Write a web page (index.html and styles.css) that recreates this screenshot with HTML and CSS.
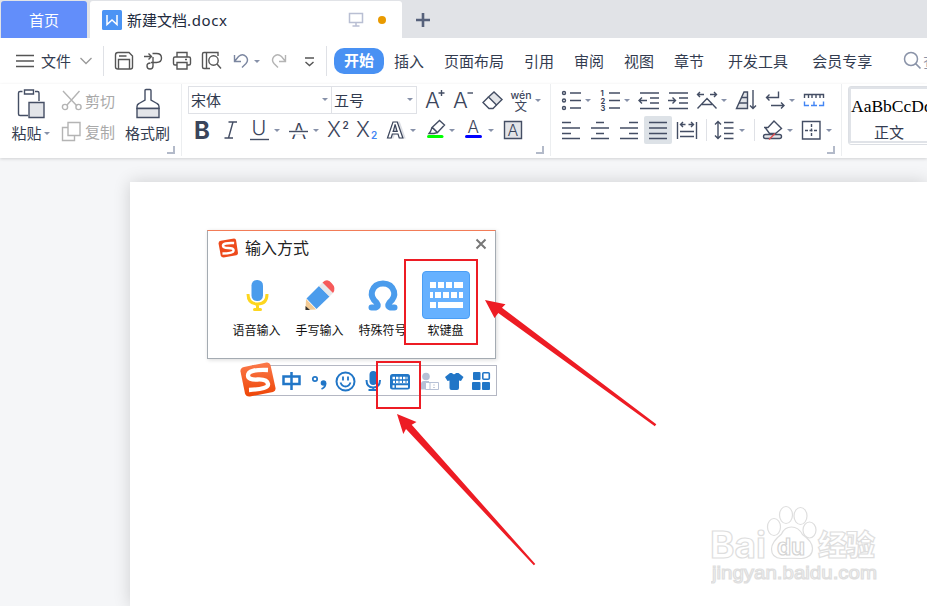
FILE: index.html
```html
<!DOCTYPE html>
<html lang="zh-CN">
<head>
    <meta charset="UTF-8">
    <title>新建文档.docx</title>
    <link rel="stylesheet" href="styles.css">
</head>
<body>
    <div class="app">
        <div class="tabbar">
            <div class="tab-home">首页</div>
            <div class="tab-doc">
                <svg class="doc-logo" width="20" height="20"><rect width="20" height="20" rx="1.5" fill="#4b94f4"/><path d="M5 5v9.5l5-4.5 5 4.500V5" fill="none" stroke="#fff" stroke-width="1.5"/></svg>
                <span class="doc-name">新建文档<span class="ext">.docx</span></span>
                <svg class="doc-screen" width="16" height="16"><path d="M1.500 1.500h13v9h-13zM8 10.500v3M4.500 14h7" fill="none" stroke="#b9bfd3" stroke-width="1.500"/></svg>
                <span class="doc-dot"></span>
            </div>
            <svg class="tab-add" width="16" height="16"><path d="M8 1v14M1 8h14" stroke="#56617b" stroke-width="2.600"/></svg>
        </div>

        <div class="menubar">
            <svg class="burger" width="19" height="14"><path d="M0 1.500h18M0 7h18M0 12.500h18" stroke="#555" stroke-width="1.500"/></svg>
            <span class="file">文件</span>
            <svg class="file-arrow" width="12" height="8"><path d="M.5 1l5.500 5.500L11.500 1" fill="none" stroke="#999" stroke-width="1.300"/></svg>
            <div class="quick">
                <svg class="ic dark" width="29" height="28"><path d="M8 5.500h11l3.500 3.500v11q0 2-2 2H8q-2.500 0-2.500-2V8q0-2.500 2.500-2.500zM8.500 22v-9.500h11V22M9 9h7.500"/></svg>
                <svg class="ic dark" width="29" height="28"><path d="M5 9.500h7M9.500 6.500l3 3-3 3M13.500 6.500h4q5 0 5 4.500t-5 4.500H12M14 10v9q0 3-3 3t-3-3 3.500-3"/></svg>
                <svg class="ic dark" width="29" height="28"><path d="M9 10V5.500h10V10M9 18H7q-1.500 0-1.500-1.500v-5Q5.500 10 7 10h14q1.500 0 1.500 1.500v5q0 1.500-1.500 1.500h-2M9 15.500h10V22H9zM17 12.500h2"/></svg>
                <svg class="ic dark" width="29" height="28"><path d="M13 21.500H7q-1.500 0-1.500-1.500V7q0-1.500 1.500-1.500h14V9M9.500 6v15"/><circle cx="16.500" cy="13.500" r="4.700"/><path d="M20 17l4 4.500"/></svg>
                <svg class="ic slate" width="39" height="28"><path d="M8.500 8v6.500H15M8.500 14.500l4-5q4-3.500 7.500 0 3 3.500 0 7L16 20.500"/><path class="caret" d="M28 13h6l-3 3z"/></svg>
                <svg class="ic pale" width="29" height="28"><path d="M20.500 8v6.500H14M20.500 14.500l-4-5q-4-3.500-7.500 0-3 3.500 0 7l4 4"/></svg>
                <svg class="ic dark" width="29" height="28"><path d="M11 11h9M11.500 15l4 3.500 4-3.500"/></svg>
            </div>
            <div class="menu">
                <span class="active">开始</span>
                <span>插入</span>
                <span>页面布局</span>
                <span>引用</span>
                <span>审阅</span>
                <span>视图</span>
                <span>章节</span>
                <span class="wide">开发工具</span>
                <span class="wide">会员专享</span>
            </div>
            <div class="search">
                <svg width="20" height="20"><circle cx="8" cy="8" r="6.500" fill="none" stroke="#8a93a8" stroke-width="1.500"/><path d="M12.500 12.500l5 5" stroke="#8a93a8" stroke-width="1.700"/></svg>
                <span>查找</span>
            </div>
        </div>

        <div class="ribbon">
            <div class="group clipboard">
                <div class="big paste">
                    <svg class="ic" width="30" height="32"><path d="M6.500 4.500H4q-1.500 0-1.500 1.500v21q0 1.500 1.500 1.500h8M19 4.500h2.500q1.500 0 1.500 1.500v8M8.500 3h9v4h-9z"/><path class="shade" d="M13 15.500h15v15H13z"/></svg>
                    <span>粘贴<i class="tri"></i></span>
                </div>
                <div class="small">
                    <div><svg class="ic pale" width="22" height="22"><path d="M2 1l14 15M18.500 1L6 15"/><circle cx="4" cy="17" r="2.600"/><circle cx="17.500" cy="17" r="2.600"/></svg>剪切</div>
                    <div><svg class="ic pale" width="22" height="22"><path d="M7 1.500h12v13H7zM7 6.500H1.500v13h12v-5"/></svg>复制</div>
                </div>
                <div class="big brush">
                    <svg class="ic" width="26" height="32"><path d="M10 13V3.500q0-1 1-1h4q1 0 1 1V13l6 3.500q2 1 2 3v2H2v-2q0-2 2-3z"/><path class="shade" d="M2 21.500h22v9H2z"/></svg>
                    <span>格式刷</span>
                </div>
            </div>

            <div class="group font">
                <div class="row">
                    <div class="select name">宋体<i class="tri"></i></div>
                    <div class="select size">五号<i class="tri"></i></div>
                    <svg class="ic" width="29" height="28"><text class="thin" x="5" y="22" font-size="22">A</text><path d="M18.500 7h6M21.500 4v6"/></svg>
                    <svg class="ic" width="29" height="28"><text class="thin" x="4" y="22" font-size="22">A</text><path d="M18.500 7H24"/></svg>
                    <svg class="ic" width="29" height="28"><path class="shade" d="M10.500 11l5.500-5 8 7.500-5.500 5.500z"/><path d="M10.500 11L5 16.500l6 6h4l3.500-3.500"/></svg>
                    <svg class="ic" width="39" height="28"><text x="3.500" y="12.500" font-size="10.500" font-weight="500">wén</text><text class="cjk" x="7.500" y="24.500" font-size="12.500">文</text><path class="caret" d="M28 13h6l-3 3z"/></svg>
                </div>
                <div class="row">
                    <svg class="ic" width="29" height="28"><text x="6" y="22.500" font-size="24" font-weight="700">B</text></svg>
                    <svg class="ic" width="29" height="28"><path d="M11.500 6H20M7.500 22H16M16 6l-4.500 16"/></svg>
                    <svg class="ic" width="39" height="28"><text class="thin" x="5.500" y="19" font-size="20">U</text><path d="M4 23.500h19"/><path class="caret" d="M28 13h6l-3 3z"/></svg>
                    <svg class="ic" width="39" height="28"><text class="thin" x="6.500" y="22.500" font-size="22">A</text><path class="gap" d="M4 16.500h19"/><path d="M4 15.500h19"/><path class="caret" d="M28 13h6l-3 3z"/></svg>
                    <svg class="ic" width="29" height="28"><text class="thin" x="3" y="21" font-size="21">X</text><text x="18.500" y="13" font-size="10" font-weight="600">2</text></svg>
                    <svg class="ic" width="29" height="28"><text class="thin" x="3" y="21" font-size="21">X</text><text class="blue" x="18" y="23" font-size="10" font-weight="600">2</text></svg>
                    <svg class="ic" width="39" height="28"><text class="hollow" x="5" y="22" font-size="22" font-weight="700">A</text><path class="caret" d="M28 13h6l-3 3z"/></svg>
                    <svg class="ic" width="39" height="28"><path d="M11 11.500L18.500 4.500l5 4.500-7 7.500zM11 11.500l-1.500 4L8 17.500h5l3.500-1M12 12l4 4"/><rect x="6" y="19" width="16.500" height="3" rx="1.500" fill="#0f0" stroke="none"/><path class="caret" d="M28 13h6l-3 3z"/></svg>
                    <svg class="ic" width="39" height="28"><text class="thin" x="7.500" y="17" font-size="17">A</text><rect x="5" y="19" width="17" height="3" rx="1.500" fill="#00f" stroke="none"/><path class="caret" d="M28 13h6l-3 3z"/></svg>
                    <svg class="ic" width="29" height="28"><path class="shade" d="M5.500 5.500h17v17h-17z"/><text class="thin" x="8.500" y="19.500" font-size="16">A</text></svg>
                </div>
            </div>

            <div class="group para">
                <div class="row">
                    <svg class="ic" width="39" height="28"><circle cx="7" cy="7" r="1.500"/><circle cx="7" cy="14.500" r="1.500"/><circle cx="7" cy="22" r="1.500"/><path d="M13 7h11M13 14.500h11M13 22h11"/><path class="caret" d="M28 13h6l-3 3z"/></svg>
                    <svg class="ic" width="39" height="28"><text x="4.500" y="9.500" font-size="7.500" font-weight="700">1</text><text x="4.500" y="17.500" font-size="7.500" font-weight="700">2</text><text x="4.500" y="25" font-size="7.500" font-weight="700">3</text><path d="M13 7h11M13 14.500h11M13 22h11"/><path class="caret" d="M28 13h6l-3 3z"/></svg>
                    <svg class="ic" width="29" height="28"><path d="M5 7h19M15 12h9M15 17h9M5 22.500h19M4 14.500h8M7 11.500l-3 3 3 3"/></svg>
                    <svg class="ic" width="29" height="28"><path d="M5 7h19M15 12h9M15 17h9M5 22.500h19M4 14.500h7M8.500 11.500l3 3-3 3"/></svg>
                    <svg class="ic" width="39" height="28"><path d="M4.500 8.500H11M7 6L4.500 8.500 7 11M17 8.500h6.500M21 6l2.500 2.500L21 11M4.500 22.500L14 12.500l9.500 10M9 18.500h10"/><path class="caret" d="M28 13h6l-3 3z"/></svg>
                    <svg class="ic" width="29" height="28"><path class="shade" d="M4.500 22.500L12 6h3.500v16.500z"/><path d="M9.500 11.500h6M7 17h8.500M21 4v18M18 19.500l3 3 3-3"/></svg>
                    <svg class="ic" width="39" height="28"><path d="M17.500 5.500v6H6M8.500 8.500l-3 3 3 3M10 19.500h12.500M20 16.500l3 3-3 3"/><path class="caret" d="M28 13h6l-3 3z"/></svg>
                    <svg class="ic" width="29" height="28"><path d="M4.500 12V8.500h19V12M8.500 8.500V12M12 8.500V12M16 8.500V12M20 8.500V12"/><path class="blue-line" d="M4.500 15.500v4H9M23.500 15.500v4H19M14 15.500v4M11 19.500h6"/></svg>
                </div>
                <div class="row">
                    <svg class="ic" width="29" height="28"><path d="M5 6.500h9M5 12h18M5 17.500h9M5 22.500h18"/></svg>
                    <svg class="ic" width="29" height="28"><path d="M10 6.500h8M5 12h18M10 17.500h8M5 22.500h18"/></svg>
                    <svg class="ic" width="29" height="28"><path d="M14 6.500h9M5 12h18M14 17.500h9M5 22.500h18"/></svg>
                    <svg class="ic on" width="28" height="28"><path d="M5 6.500h18M5 12h18M5 17.500h18M5 22.500h18"/></svg>
                    <svg class="ic" width="29" height="28"><path d="M4.500 6v17M23.500 6v17M7.500 8.500h5M10 6L7.500 8.500 10 11M15.500 8.500h5M18 6l2.500 2.500L18 11M7 15.500h14M7 20.500h14"/></svg>
                    <i class="bar"></i>
                    <svg class="ic" width="39" height="28"><path d="M7 5.500v17M4 8.500l3-3 3 3M4 19.500l3 3 3-3M13 6.500h9.500M13 12h9.500M13 17.500h9.500M13 22.500h9.500"/><path class="caret" d="M28 13h6l-3 3z"/></svg>
                    <i class="bar"></i>
                    <svg class="ic" width="39" height="28"><path d="M5 11.500h4L15 5l7.500 7.500-6 5h-6l-4-5.500"/><rect class="shade" x="4.500" y="18.500" width="18" height="4" rx="2"/><path d="M10 23.500l6-6" class="red-line"/><path class="caret" d="M28 13h6l-3 3z"/></svg>
                    <svg class="ic" width="39" height="28"><path d="M4.500 5.500h17.500v17.500H4.500z"/><path d="M13.500 8v12M7 14.500h13" stroke-dasharray="3 1.500"/><path class="caret" d="M28 13h6l-3 3z"/></svg>
                </div>
            </div>

            <div class="styles">
                <div class="style-item">
                    <div class="sample">AaBbCcDd</div>
                    <div class="style-name">正文</div>
                </div>
            </div>
        </div>

        <div class="workspace">
            <div class="page"></div>
        </div>

        <!-- 输入方式 -->
        <div class="ime-panel">
            <div class="ime-head">
                <svg width="20" height="20" viewBox="0 0 36 36"><path d="M5 5L29 1q3 0 3.500 3L36 27q0 3-3 4L10 35q-4 0-5-3L1 10q-.5-4 4-5z" fill="#ee4a1c"/><path d="M29 9Q9 8 9 14q0 4 9 4 11 0 10 5-1 5-20 5" fill="none" stroke="#fff" stroke-width="4.500"/></svg>
                <span>输入方式</span>
                <svg class="close" width="12" height="12"><path d="M1.500 1.500l9 9M10.500 1.500l-9 9" stroke="#777" stroke-width="2"/></svg>
            </div>
            <div class="ime-items">
                <div class="ime-item">
                    <svg width="48" height="48"><rect x="18.500" y="9" width="11.500" height="21" rx="5.500" fill="#4b9cec"/><path d="M15 23q0 10 9.500 10T34 23M24.500 33v5" fill="none" stroke="#fdd61f" stroke-width="3"/><rect x="20" y="37" width="9" height="3" rx="1.500" fill="#fdd61f"/></svg>
                    <span>语音输入</span>
                </div>
                <div class="ime-item">
                    <svg width="48" height="48"><path d="M10 28l10 10.500-10.500.5z" fill="#f3cb95"/><path d="M9.500 35l4.500 4H9.500z" fill="#333"/><path d="M10.500 27.500L23 15l10.500 10.500L20.500 38z" fill="#4b9cec"/><path d="M23 15l3.500-3.500L37 22l-3.500 3.500z" fill="#e8e8ea"/><path d="M26.500 11.500q5-4.500 9 .5 5 5 1.500 10z" fill="#f65a5a"/></svg>
                    <span>手写输入</span>
                </div>
                <div class="ime-item">
                    <svg width="48" height="48"><path d="M12.500 36.500h4q4-1 1-5-6-5-4.500-11Q15.500 12.500 24 12.500t11 8q1.500 6-4.500 11-3 4 1 5h4" fill="none" stroke="#4b9cec" stroke-width="6" stroke-linecap="round"/></svg>
                    <span>特殊符号</span>
                </div>
                <div class="ime-item">
                    <svg width="48" height="48"><rect x=".5" y=".5" width="47" height="47" rx="3.500" fill="#66b1ff" stroke="#4a9ef5"/><path d="M8 11h6v6H8zM16 11h6v6h-6zM24 11h6v6h-6zM32 11h9v6h-9zM8 21h3v6H8zM13 21h6v6h-6zM21 21h6v6h-6zM29 21h6v6h-6zM37 21h4v6h-4zM8 31h6v6H8zM16 31h25v6H16z" fill="#fff"/></svg>
                    <span>软键盘</span>
                </div>
            </div>
        </div>

        <div class="ime-bar">
            <svg class="ime-logo" width="36" height="36"><defs><linearGradient id="sg" x1="0" y1="0" x2="0" y2="1"><stop offset="0" stop-color="#fb7a4b"/><stop offset="1" stop-color="#ee4506"/></linearGradient></defs><path d="M4 5L26.500.5q3-.5 4 2.500L35.500 26q.5 3-2.500 4L10 34.500q-4 .5-5-3L.5 9.500Q0 6 4 5z" fill="url(#sg)"/><path d="M28 8Q8 7 8 13.500q0 4.500 9.500 4T28 22t-19 6" fill="none" stroke="#fff" stroke-width="4.300"/></svg>
            <svg width="27" height="29"><path d="M4.500 10.500h16v7.500h-16zM12.500 6v18" fill="none" stroke="#2176c7" stroke-width="2.500"/></svg>
            <svg width="27" height="29"><circle cx="9" cy="13" r="2.200" fill="none" stroke="#2176c7" stroke-width="1.700"/><circle cx="17.500" cy="17" r="2.800" fill="#2176c7"/><path d="M19.500 17q.5 4-4 6" fill="none" stroke="#2176c7" stroke-width="1.700"/></svg>
            <svg width="27" height="29"><circle cx="12.500" cy="15.500" r="9" fill="none" stroke="#2176c7" stroke-width="2"/><path d="M10 10.500v4M15 10.500v4M7.500 16.500q1.500 4 5 4t5-4" fill="none" stroke="#2176c7" stroke-width="1.800"/></svg>
            <svg width="27" height="29"><rect x="9.500" y="5" width="7.500" height="14" rx="3.700" fill="#2176c7"/><path d="M6.500 14q0 7.500 6.700 7.500T20 14M13.200 21v3.500M8.500 24h9.500" fill="none" stroke="#2176c7" stroke-width="2"/></svg>
            <svg width="27" height="29"><rect x="3" y="8" width="20" height="15.500" rx="2.500" fill="#2176c7"/><path d="M5.500 12h15M6 16h15M5.500 20.500h2M9 20.500h12" fill="none" stroke="#fff" stroke-width="2.300"/><path d="M8.500 10v7M12 10v7M15.500 10v7M19 10v7" stroke="#2176c7"/></svg>
            <svg width="27" height="29"><circle cx="12" cy="10.500" r="3.800" fill="#b6c1d6"/><path d="M7 23.500V18q0-3 3-3h5v8.500z" fill="#b6c1d6"/><path d="M11.500 16.500h13v7h-13zM16 16.500v7" fill="#fff" stroke="#b6c1d6"/><path d="M20 18.500v1M20 21v1" stroke="#8d9bb5"/></svg>
            <svg width="27" height="29"><path d="M9 7h2q2 2.500 4 0h2.500l5 4-2.500 4-2-.5V22q0 2-2 2h-5.500q-2 0-2-2v-7.500l-2 .5L4 11z" fill="#2176c7"/></svg>
            <svg width="27" height="29"><rect x="5" y="6" width="7.500" height="8" rx="1" fill="#2176c7"/><rect x="4" y="16" width="8.500" height="8" rx="1" fill="#2176c7"/><rect x="14" y="16" width="8" height="8" rx="1" fill="#2176c7"/><rect x="14.800" y="6.800" width="6.500" height="6.500" rx="1" fill="#fff" stroke="#2176c7" stroke-width="1.600"/></svg>
        </div>

        <!-- 标注 -->
        <svg class="marks" width="927" height="606">
            <rect x="405" y="260" width="72" height="84"/>
            <rect x="377" y="362" width="43" height="46"/>
            <path d="M485 300l20.500 4.300-3.500 3.400L656.300 424.300l-1.500 2L498.300 313l-3.800 5z"/>
            <path d="M397 414l19.500 8-4.800 2.700L535.300 564l-1.500 1.300L406 429l-2.700 5z"/>
        </svg>

        <svg class="watermark" width="180" height="95">
            <text class="bold" x="-1" y="63" font-size="37" textLength="56" lengthAdjust="spacingAndGlyphs">Bai</text>
            <ellipse cx="63" cy="32" rx="6.500" ry="8.500"/>
            <ellipse cx="75" cy="20" rx="6.500" ry="8.500"/>
            <ellipse cx="89.500" cy="21" rx="6.500" ry="8.500"/>
            <ellipse cx="98.500" cy="35" rx="6.500" ry="8"/>
            <path d="M80.500 32q-7 0-10 7-10 8-10 15 0 9 10 9.500 10-.5 20 0 11-1 11-10 0-7-10-14-4-7.500-11-7.500z"/>
            <text class="bold du" x="66" y="60" font-size="23" textLength="28" lengthAdjust="spacingAndGlyphs">du</text>
            <text class="cjk" x="107" y="61" font-size="29" font-weight="900" textLength="57">经验</text>
            <text x="1" y="84" font-size="19" textLength="165" lengthAdjust="spacingAndGlyphs">jingyan.baidu.com</text>
        </svg>
    </div>
</body>
</html>
```

FILE: styles.css
```css
* {
    box-sizing: border-box;
}
body {
    margin: 0;
    font-family: 'Noto Sans', 'Noto Sans CJK SC', sans-serif;
    font-size: 15px;
    color: #333c50;
}
svg {
    display: block;
    flex: none;
}
.app {
    position: relative;
    display: flex;
    flex-direction: column;
    width: 927px;
    height: 606px;
    overflow: hidden;
    background: #fff;
    white-space: nowrap;
}

/* tabs */
.tabbar {
    display: flex;
    align-items: center;
    height: 38px;
    padding: 1px 0 0 1px;
    background: #e1e3e7;
}
.tab-home {
    width: 86px;
    height: 37px;
    border-radius: 3px 3px 0 0;
    background: #628efa;
    color: #fff;
    line-height: 38px;
    text-align: center;
}
.tab-doc {
    display: flex;
    align-items: center;
    width: 312px;
    height: 37px;
    margin-left: 3px;
    padding-left: 12px;
    border-radius: 3px 3px 0 0;
    background: #fff;
}
.doc-name {
    width: 221px;
    padding-left: 5px;
    color: #222b3d;
}
.ext {
    letter-spacing: 0.6px;
}
.doc-screen {
    margin-left: 5px;
}
.doc-dot {
    width: 8px;
    height: 8px;
    margin-left: 14px;
    border-radius: 50%;
    background: #e99a00;
}
.tab-add {
    margin-left: 13px;
}

/* menu */
.menubar {
    display: flex;
    align-items: center;
    height: 46px;
    padding-left: 16px;
}
.menubar > * {
    flex: none;
}
.file {
    margin: -2px 0 0 6px;
}
.file-arrow {
    margin-left: 9px;
}
.quick {
    display: flex;
    align-items: center;
    height: 30px;
    width: 224px;
    margin-left: 11px;
    padding-left: 6px;
    border-left: 1px solid #dfe1e6;
    border-right: 1px solid #dfe1e6;
}
.menu {
    display: flex;
    align-items: center;
    gap: 20px;
    margin-left: 7px;
}
.menu span {
    margin-top: -1px;
}
.menu .active {
    width: 50px;
    height: 26px;
    margin: 0 -10px 0 0;
    border-radius: 10px;
    background: #4991f3;
    color: #fff;
    font-weight: bold;
    line-height: 25px;
    text-align: center;
}
.menu .wide {
    margin-left: 4px;
}
.search {
    display: flex;
    align-items: center;
    margin-left: 31px;
    color: #8a93a8;
}

/* icons */
.ic {
    fill: none;
    stroke: #444e64;
    stroke-width: 1.4;
}
.ic.dark {
    stroke: #555;
}
.ic.slate {
    stroke: #7b86a0;
}
.ic.pale {
    stroke: #b4b4b4;
}
.ic.on {
    margin-right: 1px;
    border-radius: 2px;
    background: #dde2e7;
}
.ic .shade {
    fill: #e3e5e9;
}
.ic .caret {
    fill: #8791a9;
    stroke: none;
}
.ic text {
    font-family: Inter, sans-serif;
    fill: #3b455b;
    stroke: none;
}
.ic text.thin {
    font-weight: 300;
}
.ic text.cjk {
    font-family: 'Noto Sans CJK SC', sans-serif;
}
.ic text.blue {
    fill: #4285f4;
}
.ic text.hollow {
    fill: #fff;
    stroke: #3b455b;
    stroke-width: 1.2;
    filter: drop-shadow(2px 0 0 #dddfe4);
}
.ic .gap {
    stroke: #fff;
    stroke-width: 4;
}
.ic .blue-line {
    stroke: #4285f4;
}
.ic .red-line {
    stroke: #e05050;
}
.tri {
    display: inline-block;
    border: 3px solid transparent;
    border-top-color: #8791a9;
    border-bottom: 0;
}

/* ribbon */
.ribbon {
    position: relative;
    z-index: 1;
    display: flex;
    height: 74px;
    background: #fff;
    box-shadow: 0 1px 3px rgba(0, 0, 0, 0.15);
}
.group {
    position: relative;
    flex: none;
    height: 72px;
    padding-top: 2px;
    border-right: 1px solid #eceef0;
}
.group::after {
    content: '';
    position: absolute;
    right: 6px;
    bottom: 2px;
    width: 6px;
    height: 6px;
    border: solid #b3bac9;
    border-width: 0 2px 2px 0;
}
.row {
    display: flex;
    height: 28px;
    margin-bottom: 2px;
}
.clipboard {
    display: flex;
    width: 182px;
    padding-left: 10px;
}
.big {
    display: flex;
    flex-direction: column;
    align-items: center;
    line-height: 24px;
}
.big svg {
    height: 35px;
    padding-top: 1px;
}
.paste {
    width: 41px;
}
.paste .tri {
    margin: 0 0 4px 2px;
}
.brush {
    margin-left: 10px;
}
.small {
    margin: -1px 0 0 10px;
    color: #a9a9a9;
}
.small div {
    display: flex;
    align-items: center;
    gap: 2px;
    height: 31px;
}
.font {
    width: 369px;
    padding-left: 6px;
}
.select {
    display: flex;
    align-items: center;
    justify-content: space-between;
    height: 28px;
    padding: 0 3px 2px 2px;
    border: 1px solid #dfe1e6;
}
.name {
    width: 144px;
}
.size {
    width: 85px;
    margin: 0 3px 0 0;
    border-left: 0;
}
.para {
    width: 291px;
    padding-left: 6px;
}
.bar {
    width: 1px;
    height: 22px;
    margin: 3px 4px;
    background: #dfe1e6;
}
.styles {
    flex: none;
    width: 120px;
    height: 59px;
    margin: 2px 0 0 6px;
    border: 1px solid #dcdfe4;
    border-radius: 3px;
}
.style-item {
    height: 56px;
    padding-top: 5px;
    border: 2px solid #e0e3e8;
    line-height: 24px;
}
.sample {
    color: #000;
    font: 17.5px/24px 'Liberation Serif', serif;
}
.style-name {
    padding-left: 23px;
    line-height: 29px;
}

/* document */
.workspace {
    flex: 1;
    padding: 24px 0 0 130px;
    background: #f5f6f8;
}
.page {
    height: 100%;
    background: #fff;
    box-shadow: 0 0 16px rgba(0, 0, 0, 0.16);
}

/* input method */
.ime-panel {
    position: absolute;
    z-index: 2;
    left: 207px;
    top: 230px;
    width: 289px;
    height: 129px;
    border: 1px solid #a4abb2;
    border-top-color: #f27c58;
    background: #fff;
    box-shadow: 1px 1px 4px rgba(0, 0, 0, 0.15);
}
.ime-head {
    display: flex;
    align-items: center;
    height: 34px;
    padding-left: 10px;
    color: #222;
    font-size: 16px;
}
.ime-head span {
    width: 230px;
    margin-top: -2px;
    padding-left: 7px;
}
.close {
    margin: -8px 0 0 7px;
}
.ime-items {
    display: flex;
    margin: 6px 0 0 17px;
}
.ime-item {
    display: flex;
    flex-direction: column;
    align-items: center;
    width: 63px;
    color: #111;
    font-size: 12px;
    line-height: 24px;
}
.ime-bar {
    position: absolute;
    z-index: 2;
    left: 252px;
    top: 365px;
    display: flex;
    width: 245px;
    height: 31px;
    border: 1px solid #b4b7c3;
    background: #fff;
}
.ime-logo {
    margin: -4px 3px 0 -13px;
}

/* overlays */
.marks {
    position: absolute;
    z-index: 3;
    left: 0;
    top: 0;
    fill: #ed1c24;
}
.marks rect {
    fill: none;
    stroke: #ed1c24;
    stroke-width: 2;
}
.watermark {
    position: absolute;
    left: 711px;
    top: 495px;
    fill: #fff;
    stroke: #dedede;
    stroke-width: 1.2;
    font-family: 'Liberation Sans', sans-serif;
}
.watermark .bold {
    font-family: Inter, sans-serif;
    font-weight: 700;
}
.watermark .du {
    stroke: #d4d4d4;
}
.watermark .cjk {
    font-family: 'Noto Sans CJK SC', sans-serif;
}
```
